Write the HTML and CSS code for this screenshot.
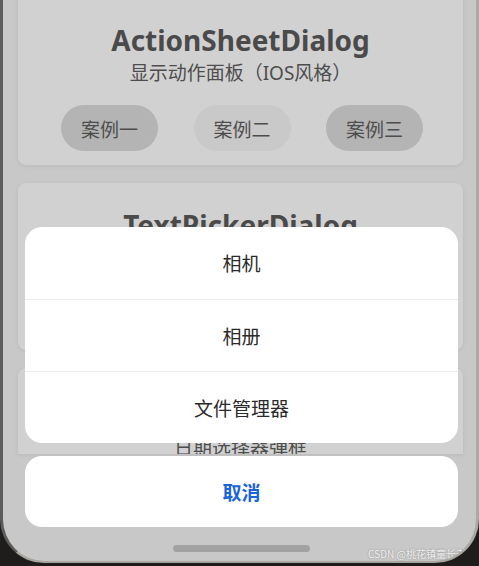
FILE: index.html
```html
<!DOCTYPE html>
<html lang="zh-CN">

<head>
    <meta charset="UTF-8">
    <meta name="viewport" content="width=device-width, initial-scale=1.0">
    <title>ActionSheetDialog</title>
    <link rel="stylesheet" href="styles.css">
</head>

<body>

    <div class="phone">
        <div class="screen">
            <div class="card-list">
                <div class="card card-first">
                    <h2>ActionSheetDialog</h2>
                    <p>显示动作面板（IOS风格）</p>
                    <div class="case-row">
                        <button class="case-btn">案例一</button>
                        <button class="case-btn light">案例二</button>
                        <button class="case-btn">案例三</button>
                    </div>
                </div>
                <div class="card">
                    <h2>TextPickerDialog</h2>
                    <p>文本选择器弹框</p>
                </div>
                <div class="card card-last">
                    <h2>DatePickerDialog</h2>
                    <p>日期选择器弹框</p>
                </div>
            </div>

            <!-- action sheet over the dimmed page -->
            <div class="sheet">
                <div class="sheet-group">
                    <div class="sheet-item">相机</div>
                    <div class="sheet-item">相册</div>
                    <div class="sheet-item">文件管理器</div>
                </div>
                <div class="sheet-cancel">取消</div>
            </div>

            <div class="home-bar"></div>
            <div class="watermark">CSDN @桃花镇童长老</div>
        </div>
    </div>

</body>

</html>
```

FILE: styles.css
```css
body {
    margin: 0;
    background-color: #1f1d1b;
    font-family: "Noto Sans", "Noto Sans CJK SC", sans-serif;
}

.phone {
    width: 479px;
    height: 563px;
    box-sizing: border-box;
    border-left: 3px solid #5c5c5a;
    border-right: 3px solid #a9a9a6;
    border-bottom: 2px solid #a8a59b;
    border-radius: 0 0 44px 44px;
    overflow: hidden;
    background-color: #c8c8c8;
}

.screen {
    position: relative;
    height: 100%;
    overflow: hidden;
}

.card-list {
    display: flex;
    flex-direction: column;
    gap: 18px;
    padding: 0 13px 0 15px;
    margin-top: -20px;
}

.card {
    background-color: #d1d1d1;
    border-radius: 8px;
    box-shadow: 0 1px 4px rgba(0, 0, 0, 0.08);
    text-align: center;
    height: 167px;
    box-sizing: border-box;
    padding-top: 22px;
}

.card-first {
    height: 185px;
    padding-top: 40px;
}

.card-last {
    height: 86px;
    padding-top: 27px;
    overflow: hidden;
    border-radius: 8px 8px 0 0;
}

.card h2 {
    margin: 0;
    font-size: 28px;
    font-weight: 700;
    color: #4a4a4a;
    line-height: 40px;
}

.card p {
    margin: 0;
    font-size: 19px;
    color: #4d4d4d;
    line-height: 26px;
}

.case-row {
    display: flex;
    justify-content: space-between;
    padding: 0 40px 0 43px;
    margin-top: 19px;
}

.case-btn {
    width: 97px;
    height: 46px;
    border: none;
    border-radius: 23px;
    background-color: #b4b4b4;
    color: #4d4d4d;
    font-family: "Noto Sans CJK SC", sans-serif;
    font-size: 19px;
}

.case-btn.light {
    background-color: #c9c9c9;
}

.sheet {
    position: absolute;
    left: 22px;
    top: 227px;
    width: 433px;
    display: flex;
    flex-direction: column;
    gap: 13px;
}

.sheet-group,
.sheet-cancel {
    background-color: #ffffff;
    border-radius: 17px;
    overflow: hidden;
}

.sheet-item {
    height: 72px;
    line-height: 72px;
    text-align: center;
    font-family: "Noto Sans CJK SC", sans-serif;
    font-size: 19px;
    color: #2a2a2a;
}

.sheet-item + .sheet-item {
    border-top: 1px solid #ececec;
    height: 71px;
    line-height: 71px;
}

.sheet-cancel {
    height: 71px;
    line-height: 71px;
    text-align: center;
    font-family: "Noto Sans CJK SC", sans-serif;
    font-size: 19px;
    font-weight: 700;
    color: #1b63dc;
}

.home-bar {
    position: absolute;
    left: 170px;
    top: 545px;
    width: 137px;
    height: 7px;
    border-radius: 4px;
    background-color: #a2a2a2;
}

.watermark {
    position: absolute;
    right: 10px;
    top: 546px;
    font-family: "Noto Sans CJK SC", sans-serif;
    font-size: 10px;
    color: rgba(255, 255, 255, 0.85);
    text-shadow: 0 0 2px rgba(0, 0, 0, 0.35);
}
```
